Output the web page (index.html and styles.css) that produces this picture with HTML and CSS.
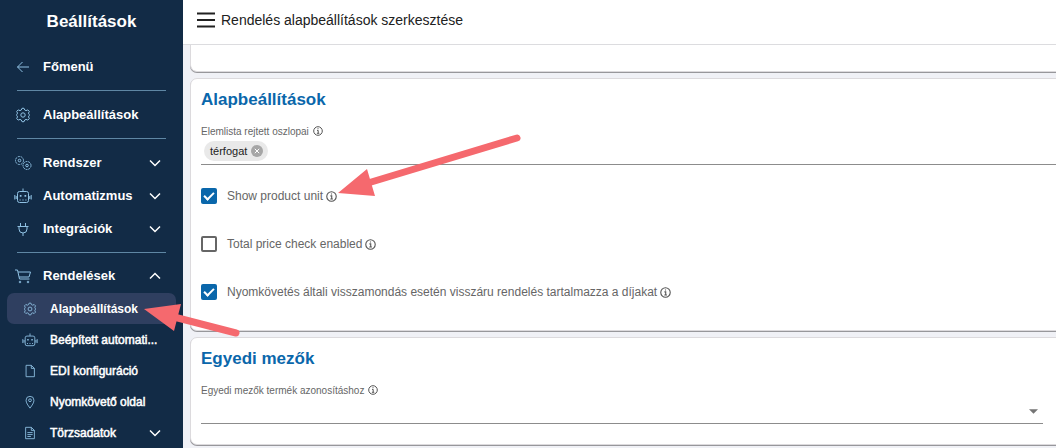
FILE: index.html
```html
<!DOCTYPE html>
<html lang="hu">
<head>
  <meta charset="UTF-8">
  <meta name="viewport" content="width=device-width, initial-scale=1.0">
  <title>Rendelés alapbeállítások szerkesztése</title>
  <link rel="stylesheet" href="styles.css">
</head>
<body>
  <!-- Shared icons -->
  <svg class="sprite" aria-hidden="true">
    <symbol id="gear" viewBox="0 0 16 16">
      <path d="M6.300 3L7 1.300h2L9.700 3l1.300.6 1.800-.7 1.500 1.500-.8 1.700.4 1.200.8.700-.8.700-.4 1.200.8 1.700-1.500 1.500-1.800-.7-1.300.6L9 14.700H7L6.300 13 5 12.400l-1.800.7-1.500-1.500.8-1.700-.4-1.200L1.300 8l.8-.7.400-1.200-.8-1.700 1.500-1.500 1.800.7z"/>
      <circle cx="8" cy="8" r="2.200"/>
    </symbol>
    <symbol id="robot" viewBox="0 0 18 16">
      <rect x="3.500" y="3.500" width="11" height="11" rx="2"/>
      <path d="M9 .5v3M.8 7v4.500M17.200 7v4.500M2.200 8v3M15.800 8v3M5.500 12h1.200M8.400 12h1.200M11.300 12h1.200"/>
      <path d="M5.800 7.800h1.700M10.500 7.800h1.700" stroke-width="1.800"/>
    </symbol>
    <symbol id="down" viewBox="0 0 12 8"><path d="M1 1.500l5 5 5-5"/></symbol>
    <symbol id="up" viewBox="0 0 12 8"><path d="M1 6.500l5-5 5 5"/></symbol>
    <symbol id="info" viewBox="0 0 10 10">
      <circle cx="5" cy="5" r="4.300"/>
      <path d="M4 4.400h1.200v2.800M3.900 7.300h2.400M4.500 2.700h1"/>
    </symbol>
  </svg>

  <div class="page">
    <!-- Sidebar -->
    <nav class="sidebar">
      <h1 class="title">Beállítások</h1>
      <div class="group single">
        <a class="item" href="#">
          <svg class="icon" viewBox="0 0 16 16"><path d="M14 8H2.500M7.500 3l-5 5 5 5"/></svg>
          <span>Főmenü</span>
        </a>
      </div>
      <div class="group single">
        <a class="item" href="#"><svg class="icon"><use href="#gear"/></svg><span>Alapbeállítások</span></a>
      </div>
      <div class="group">
        <button class="item" type="button">
          <svg class="icon" viewBox="0 0 18 16">
            <g stroke-dasharray="2 .8"><circle cx="5.500" cy="5.500" r="4"/><circle cx="13" cy="10.500" r="4"/></g>
            <circle cx="5.500" cy="5.500" r="1.300"/><circle cx="13" cy="10.500" r="1.300"/>
          </svg>
          <span>Rendszer</span>
          <svg class="chevron"><use href="#down"/></svg>
        </button>
        <button class="item" type="button">
          <svg class="icon"><use href="#robot"/></svg>
          <span>Automatizmus</span>
          <svg class="chevron"><use href="#down"/></svg>
        </button>
        <button class="item" type="button">
          <svg class="icon" viewBox="0 0 16 16"><path d="M5.500 2v3.500M10.500 2v3.500M2.500 5.500h11M4 5.500V8a4 4 0 0 0 8 0V5.500M8 12v3"/></svg>
          <span>Integrációk</span>
          <svg class="chevron"><use href="#down"/></svg>
        </button>
      </div>
      <div class="group last">
        <button class="item" type="button" aria-expanded="true">
          <svg class="icon" viewBox="0 0 18 16"><path d="M1 2h2.500l2 9h10M4 4h12.500l-1.500 5H5.200"/><circle cx="6" cy="14" r=".8"/><circle cx="14" cy="14" r=".8"/></svg>
          <span>Rendelések</span>
          <svg class="chevron"><use href="#up"/></svg>
        </button>
      </div>
      <div class="submenu">
        <a class="item active" href="#"><svg class="icon"><use href="#gear"/></svg><span>Alapbeállítások</span></a>
        <a class="item" href="#"><svg class="icon"><use href="#robot"/></svg><span>Beépített automati...</span></a>
        <a class="item" href="#">
          <svg class="icon" viewBox="0 0 16 16"><path d="M3.500 1.500h6l3.500 3.500v9.500H3.500zM9.500 1.500V5H13"/></svg>
          <span>EDI konfiguráció</span>
        </a>
        <a class="item" href="#">
          <svg class="icon" viewBox="0 0 16 16"><path d="M8 15C5.500 11.500 3.500 9 3.500 6a4.500 4.500 0 0 1 9 0c0 3-2 5.500-4.500 9z"/><circle cx="8" cy="6" r="1.600"/></svg>
          <span>Nyomkövető oldal</span>
        </a>
        <button class="item" type="button">
          <svg class="icon" viewBox="0 0 16 16"><path d="M3 1.500h6.500L13 5v9.500H3zM9.500 1.500V5H13M5 7.500h6M5 9.800h6M5 12h4"/></svg>
          <span>Törzsadatok</span>
          <svg class="chevron"><use href="#down"/></svg>
        </button>
      </div>
    </nav>

    <!-- Content -->
    <main class="content">
      <header class="topbar">
        <button class="menu" type="button" aria-label="Menü">
          <svg viewBox="0 0 18 16"><path d="M0 1.500h18M0 8h18M0 14.500h18"/></svg>
        </button>
        <span>Rendelés alapbeállítások szerkesztése</span>
      </header>

      <div class="cards">
        <section class="card cut"></section>

        <section class="card">
          <h2>Alapbeállítások</h2>
          <label class="caption" for="columns">Elemlista rejtett oszlopai <svg class="info"><use href="#info"/></svg></label>
          <div class="field chips">
            <span class="chip">térfogat
              <button class="remove" type="button" aria-label="Törlés">
                <svg viewBox="0 0 12 12"><circle cx="6" cy="6" r="6"/><path d="M3.800 3.800l4.400 4.400M8.200 3.800L3.800 8.200"/></svg>
              </button>
            </span>
            <input id="columns" type="text">
          </div>
          <div class="checks">
            <label class="check"><input type="checkbox" checked><span>Show product unit</span><svg class="info"><use href="#info"/></svg></label>
            <label class="check"><input type="checkbox"><span>Total price check enabled</span><svg class="info"><use href="#info"/></svg></label>
            <label class="check"><input type="checkbox" checked><span>Nyomkövetés általi visszamondás esetén visszáru rendelés tartalmazza a díjakat</span><svg class="info"><use href="#info"/></svg></label>
          </div>
        </section>

        <section class="card">
          <h2>Egyedi mezők</h2>
          <label class="caption" for="custom">Egyedi mezők termék azonosításhoz <svg class="info"><use href="#info"/></svg></label>
          <div class="field select">
            <select id="custom"><option></option></select>
            <svg class="caret" viewBox="0 0 10 5"><path d="M0 0h10L5 5z"/></svg>
          </div>
        </section>
      </div>
    </main>

    <!-- Arrows pointing at the settings -->
    <svg class="arrows" aria-hidden="true">
      <path class="shaft" d="M517 138L368 183M236 333L174 317"/>
      <path class="head" d="M338 193l29-24 8 27zM144 309l37-5-7 27z"/>
    </svg>
  </div>
</body>
</html>
```
FILE: styles.css
```css
* {
  box-sizing: border-box;
}

body {
  margin: 0;
  font-family: "Liberation Sans", Arial, sans-serif;
  background: #f0f1f6;
  color: #212121;
}

button {
  padding: 0;
  border: none;
  background: none;
  font: inherit;
  color: inherit;
  cursor: pointer;
}

svg {
  flex: none;
  fill: none;
  stroke: currentColor;
}

.sprite {
  position: absolute;
  width: 0;
  height: 0;
}

.page {
  position: relative;
  display: flex;
  height: 100vh;
  overflow: hidden;
}

/* Sidebar */
.sidebar {
  flex: none;
  width: 183px;
  background: #122b46;
  color: #fff;
  overflow: hidden;
}

.title {
  margin: 0;
  line-height: 43px;
  font-size: 17px;
  text-align: center;
}

.group {
  margin: 0 17px;
  padding: 7px 0;
  border-bottom: 1px solid #5f87a4;
}

.group.last {
  padding: 6px 0 1px;
  border: none;
}

.item {
  display: flex;
  align-items: center;
  width: 100%;
  height: 33px;
  font-size: 13px;
  font-weight: bold;
  color: #fff;
  text-align: left;
  text-decoration: none;
}

.item span {
  flex: 1;
  white-space: nowrap;
}

.icon {
  width: 18px;
  height: 16px;
  margin: 0 11px 0 -3px;
  color: #8fc1e3;
}

.chevron {
  width: 12px;
  height: 8px;
  margin-right: 5px;
  stroke-width: 1.5;
}

.submenu {
  padding: 0 7px;
}

.submenu .item {
  height: 31px;
  padding: 0 15px 0 17px;
  border-radius: 7px;
  font-size: 12px;
  font-weight: normal;
}

/* medium weight, between regular and bold */
.submenu span {
  -webkit-text-stroke: 0.5px #fff;
}

.submenu .icon {
  width: 16px;
  height: 14px;
  margin: 0 12px 0 -2px;
}

.submenu .chevron {
  margin-right: 0;
}

.submenu .active {
  background: #2f3f60;
  font-weight: bold;
}

.active span {
  -webkit-text-stroke: 0;
}

/* Content */
.content {
  flex: 1;
  min-width: 0;
  overflow: hidden;
}

.topbar {
  display: flex;
  align-items: center;
  gap: 6px;
  height: 45px;
  padding: 0 14px 5px;
  border-bottom: 1px solid #dcdcdf;
  background: #fff;
  font-size: 14px;
}

.menu svg {
  display: block;
  width: 18px;
  height: 16px;
  stroke-width: 2;
}

.cards {
  display: flex;
  flex-direction: column;
  gap: 6px;
  padding-left: 7px;
}

.card {
  margin-right: -8px;
  padding: 11px 20px 20px 10px;
  border: 1px solid #dcdadd;
  border-radius: 7px;
  background: #fff;
  box-shadow: 0 1px 0 #97979b;
}

.card.cut {
  height: 27px;
  padding: 0;
  border-top: none;
  border-radius: 0 0 7px 7px;
}

.card h2 {
  margin: 0 0 11px;
  line-height: 20px;
  font-size: 17px;
  color: #0a67ab;
}

.caption {
  display: flex;
  align-items: center;
  gap: 4px;
  height: 20px;
  font-size: 10px;
  color: #666;
}

.info {
  width: 10px;
  height: 10px;
  color: #555;
}

.field {
  display: flex;
  align-items: center;
  border-bottom: 1px solid #8c8c8c;
}

.chips {
  height: 24px;
  margin-right: -20px;
  padding: 0 3px 4px;
}

.chip {
  display: flex;
  align-items: center;
  gap: 4px;
  height: 20px;
  padding: 0 5px 0 6px;
  border-radius: 10px;
  background: #e9e9e9;
  font-size: 11px;
  color: #222;
}

.remove svg {
  display: block;
  width: 12px;
  height: 12px;
  fill: #a6a6a6;
  stroke: none;
}

.remove path {
  stroke: #fff;
}

.field input,
.field select {
  flex: 1;
  height: 20px;
  border: none;
  outline: none;
  background: none;
  appearance: none;
}

.select {
  height: 24px;
  padding-right: 5px;
}

.caret {
  width: 9px;
  height: 5px;
  fill: #757575;
  stroke: none;
}

/* Checkboxes */
.checks {
  display: flex;
  flex-direction: column;
  gap: 32px;
  padding: 23px 0 10px;
}

.check {
  display: flex;
  align-items: center;
  gap: 3px;
  height: 16px;
  font-size: 12px;
  color: #666;
}

.check .info {
  width: 11px;
  height: 11px;
}

.check input {
  appearance: none;
  width: 16px;
  height: 16px;
  margin: 0 7px 0 0;
  border: 2px solid #666;
  border-radius: 2px;
}

.check input:checked {
  border: none;
  background: #0a67ab;
}

.check input:checked::before {
  content: "";
  display: block;
  width: 4px;
  height: 8px;
  margin: 2px 0 0 5px;
  border: solid #fff;
  border-width: 0 2px 2px 0;
  transform: rotate(45deg);
}

/* Arrows */
.arrows {
  position: absolute;
  top: 0;
  left: 0;
  width: 100%;
  height: 100%;
  color: #f5696e;
  pointer-events: none;
}

.shaft {
  stroke-width: 7;
  stroke-linecap: round;
}

.head {
  fill: currentColor;
  stroke: none;
}
```
